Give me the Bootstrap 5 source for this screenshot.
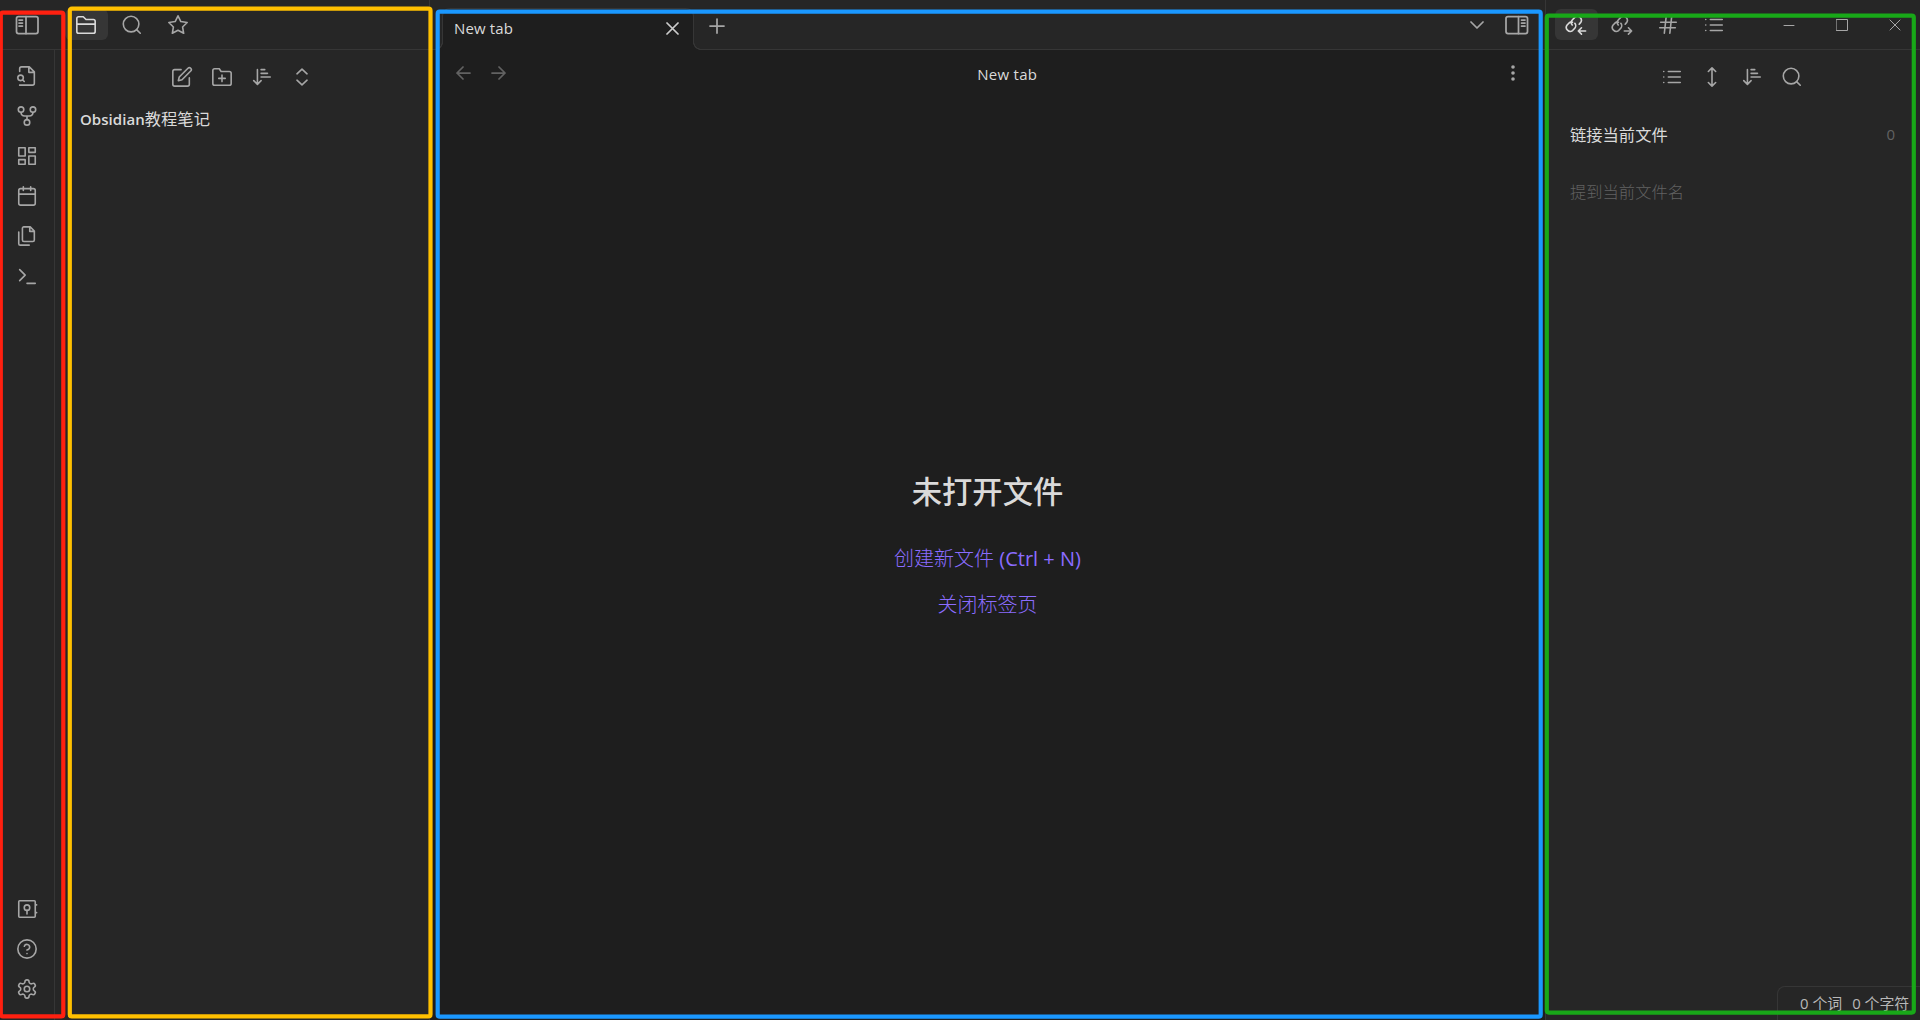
<!DOCTYPE html>
<html lang="zh-CN">
<head>
<meta charset="utf-8">
<title>Obsidian</title>
<link href="https://cdn.jsdelivr.net/npm/bootstrap@5.3.0/dist/css/bootstrap.min.css" rel="stylesheet">
<style>
:root{--line:#363636;--side:#262626;--main:#1e1e1e;--ico:#a6a6a6;--txt:#dadada}
body{width:1920px;height:1020px;background:var(--side);color:var(--txt);font:400 15px/24px "Open Sans","Noto Sans CJK SC",sans-serif;overflow:hidden}
.cjk{font-family:"Noto Sans CJK SC",sans-serif;font-weight:300}
.ic{width:22px;height:22px;flex:none;display:block;fill:none;stroke:var(--ico);stroke-width:1.75;stroke-linecap:round;stroke-linejoin:round}
.left-pane{width:430px;border-right:1px solid var(--line)}
.right-pane{width:375px;border-left:1px solid var(--line);margin-left:-1px}
.topbar{height:50px;border-bottom:1px solid var(--line);flex:none}
.ribbon{width:55px;border-right:1px solid var(--line);padding:15px 0 20px}
.tabbtn{width:43px;height:31px;border-radius:6px;display:flex;align-items:center;justify-content:center}
.tabbtn.active{background:#363636}
.tabbtn.active .ic{stroke:var(--txt)}
.tabbtn .ic{margin-left:-1px}
.tools{gap:18px;padding-top:15.500px}
.vault-name{padding:18.500px 0 0 25px;font-size:16.300px}
.vault-name b{font-weight:600;font-size:15px;letter-spacing:.05px}
.main-pane{background:var(--main)}
.strip{background:var(--side);padding-left:12px}
.doc-tab{width:252px;height:42px;margin:8px 0 -1px;background:var(--main);border:1px solid var(--line);border-bottom:0;border-radius:8px 8px 0 0;padding:0 14px 3px 11px;position:relative;letter-spacing:.15px}
.doc-tab::before,.doc-tab::after{content:"";position:absolute;bottom:0;width:8px;height:8px}
.doc-tab::before{left:-8px;background:radial-gradient(circle at 0 0,var(--side) 6.500px,var(--line) 7px 7.700px,var(--main) 8.200px)}
.doc-tab::after{right:-8px;background:radial-gradient(circle at 100% 0,var(--side) 6.500px,var(--line) 7px 7.700px,var(--main) 8.200px)}
.view-head{height:48px;padding:0 20px 0 12px}
.empty-title{font:500 30.300px/40px "Noto Sans CJK SC",sans-serif}
.act{color:#8b6cff;font-size:20px;line-height:28px}
.faint{color:#626262}
.status{width:143px;height:34px;border:1px solid var(--line);border-right:0;border-bottom:0;border-radius:8px 0 0 0;padding:4px 0 0 22px;font-size:14.900px;color:#b8b8b8;gap:10px;white-space:nowrap}
.marks{position:absolute;left:0;top:0;pointer-events:none}
</style>
<script src="https://cdn.jsdelivr.net/npm/bootstrap@5.3.0/dist/js/bootstrap.bundle.min.js"></script>
</head>
<body class="d-flex m-0 position-relative">
<svg width="0" height="0" class="position-absolute">
<symbol id="search" viewBox="0 0 24 24"><circle cx="11" cy="11" r="8.5"/><path d="m21 21-4-4"/></symbol>
<symbol id="list" viewBox="0 0 24 24"><path d="M8 6h13M8 12h13M8 18h13M3 6h.01M3 12h.01M3 18h.01"/></symbol>
<symbol id="sort" viewBox="0 0 24 24"><path d="m3 16 4 4 4-4M7 20V4M11 4h4M11 8h7M11 12h10"/></symbol>
<symbol id="chain" viewBox="0 0 24 24"><path transform="translate(-.7 .4) scale(.86)" stroke-width="2.050" d="M10 13.500a5 5 0 0 1 .3-6.600l3.200-3.400a5 5 0 0 1 7 7l-1.700 2M10.300 10 9 9.500a5 5 0 0 0-2.500 1l-3 3a5 5 0 0 0 7 7l2-2.200a5 5 0 0 0 .8-7"/></symbol>
</svg>
<aside class="left-pane d-flex flex-column flex-shrink-0">
 <div class="topbar d-flex">
  <div class="d-flex align-items-center justify-content-center" style="width:54px">
   <svg class="ic" style="width:24px;height:20px" viewBox="0 0 24 20"><rect x="1.500" y="1.500" width="21.500" height="17" rx="2"/><path d="M11 1.500v17M4 5h3.500M4 8h3.500M4 11h3.500" /></svg>
  </div>
  <div class="d-flex" style="padding:9px 0 0 11px;gap:3px">
   <div class="tabbtn active"><svg class="ic" viewBox="0 0 24 24"><path d="M2 19V5a2 2 0 0 1 2-2h5l3 3h8a2 2 0 0 1 2 2v11a2 2 0 0 1-2 2H4a2 2 0 0 1-2-2zM2 11h20"/></svg></div>
   <div class="tabbtn"><svg class="ic"><use href="#search"/></svg></div>
   <div class="tabbtn"><svg class="ic" viewBox="0 0 24 24"><path d="m12 2 3.090 6.260L22 9.270l-5 4.870 1.180 6.880L12 17.770l-6.180 3.250L7 14.140 2 9.270l6.910-1.010L12 2z"/></svg></div>
  </div>
 </div>
 <div class="d-flex flex-grow-1">
  <nav class="ribbon d-flex flex-column align-items-center justify-content-between">
   <div class="d-flex flex-column" style="gap:18px">
    <svg class="ic" viewBox="0 0 24 24"><path d="M4 22h14a2 2 0 0 0 2-2V7.500L14.500 2H6a2 2 0 0 0-2 2v3M14 2v6h6M5 17a3 3 0 1 0 0-6 3 3 0 0 0 0 6zM9 18l-1.500-1.500"/></svg>
    <svg class="ic" viewBox="0 0 24 24"><circle cx="12" cy="19" r="3"/><circle cx="5.500" cy="5" r="3"/><circle cx="18.500" cy="5" r="3"/><path d="M5.500 8c0 3 2 4 4 4h5c2 0 4-1 4-4M12 12v4"/></svg>
    <svg class="ic" viewBox="0 0 24 24"><path d="M3 3h7v9H3zM14 3h7v5h-7zM14 12h7v9h-7zM3 16h7v5H3z"/></svg>
    <svg class="ic" viewBox="0 0 24 24"><rect x="3" y="4" width="18" height="18" rx="2"/><path d="M16 2v4M8 2v4M3 10h18"/></svg>
    <svg class="ic" viewBox="0 0 24 24"><path d="M15.500 2H8.600c-.9 0-1.600.7-1.600 1.600v12.800c0 .9.700 1.600 1.600 1.600h9.800c.9 0 1.600-.7 1.600-1.600V6.500L15.500 2zM3 7.600v12.800c0 .9.700 1.600 1.600 1.600h9.800M15 2v5h5"/></svg>
    <svg class="ic" viewBox="0 0 24 24"><path d="m4 17 6-6-6-6M12 20h9"/></svg>
   </div>
   <div class="d-flex flex-column" style="gap:18px">
    <svg class="ic" viewBox="0 0 24 24"><rect x="3" y="3" width="18" height="18" rx="1"/><circle cx="12" cy="10.500" r="3"/><path d="M12 13.500v4M22 7.500h.5M22 16h.5"/></svg>
    <svg class="ic" viewBox="0 0 24 24"><circle cx="12" cy="12" r="10"/><path d="M9.090 9a3 3 0 0 1 5.830 1c0 2-3 3-3 3M12 17h.01"/></svg>
    <svg class="ic" viewBox="0 0 24 24"><circle cx="12" cy="12" r="3"/><path d="M12.220 2h-.44a2 2 0 0 0-2 2v.18a2 2 0 0 1-1 1.730l-.43.25a2 2 0 0 1-2 0l-.15-.08a2 2 0 0 0-2.730.73l-.22.38a2 2 0 0 0 .73 2.730l.15.1a2 2 0 0 1 1 1.720v.51a2 2 0 0 1-1 1.740l-.15.09a2 2 0 0 0-.73 2.730l.22.38a2 2 0 0 0 2.730.73l.15-.08a2 2 0 0 1 2 0l.43.25a2 2 0 0 1 1 1.730V20a2 2 0 0 0 2 2h.44a2 2 0 0 0 2-2v-.18a2 2 0 0 1 1-1.730l.43-.25a2 2 0 0 1 2 0l.15.08a2 2 0 0 0 2.730-.73l.22-.39a2 2 0 0 0-.73-2.730l-.15-.08a2 2 0 0 1-1-1.740v-.5a2 2 0 0 1 1-1.740l.15-.09a2 2 0 0 0 .73-2.730l-.22-.38a2 2 0 0 0-2.730-.73l-.15.08a2 2 0 0 1-2 0l-.43-.25a2 2 0 0 1-1-1.730V4a2 2 0 0 0-2-2z"/></svg>
   </div>
  </nav>
  <section class="flex-grow-1">
   <div class="tools d-flex justify-content-center">
    <svg class="ic" viewBox="0 0 24 24"><path d="M11 4H4a2 2 0 0 0-2 2v14a2 2 0 0 0 2 2h14a2 2 0 0 0 2-2v-7M18.500 2.500a2.121 2.121 0 0 1 3 3L12 15l-4 1 1-4z"/></svg>
    <svg class="ic" viewBox="0 0 24 24"><path d="M2 19V5a2 2 0 0 1 2-2h5l2 3h9a2 2 0 0 1 2 2v11a2 2 0 0 1-2 2H4a2 2 0 0 1-2-2zM12 10v7M8.500 13.500h7"/></svg>
    <svg class="ic"><use href="#sort"/></svg>
    <svg class="ic" viewBox="0 0 24 24"><path d="m6.500 15.500 5.500 5 5.500-5M6.500 8.500l5.500-5 5.500 5"/></svg>
   </div>
   <div class="vault-name"><b>Obsidian</b><span class="cjk fw-normal">教程笔记</span></div>
  </section>
 </div>
</aside>
<main class="main-pane flex-grow-1 d-flex flex-column">
 <div class="topbar strip d-flex">
  <div class="doc-tab d-flex align-items-center justify-content-between"><span>New tab</span><svg class="ic" style="width:13px;height:13px;stroke:#ccc" viewBox="0 0 13 13"><path d="m1 1 11 11M12 1 1 12"/></svg></div>
  <svg class="ic" style="width:16px;height:16px;margin:17.500px 0 0 15px" viewBox="0 0 16 16"><path d="M8 1v14M1 8h14"/></svg>
  <div class="d-flex ms-auto align-items-center" style="gap:21px;padding-right:17px">
   <svg class="ic" style="width:14px;height:8px" viewBox="0 0 14 8"><path d="m1 1 6 6 6-6"/></svg>
   <svg class="ic" style="width:24px;height:20px" viewBox="0 0 24 20"><rect x="1" y="1.500" width="21.500" height="17" rx="2"/><path d="M13.500 1.500v17M16.500 5H20M16.500 8H20M16.500 11H20"/></svg>
  </div>
 </div>
 <div class="view-head d-flex align-items-center justify-content-between">
  <div class="d-flex" style="gap:20px;opacity:.5;padding:0 0 2px 12.500px">
   <svg class="ic" style="width:16px;height:16px" viewBox="0 0 16 16"><path d="M15 8H2M8 2 2 8l6 6"/></svg>
   <svg class="ic" style="width:16px;height:16px" viewBox="0 0 16 16"><path d="M1 8h13M8 2l6 6-6 6"/></svg>
  </div>
  <span style="margin-left:4px;letter-spacing:.25px">New tab</span>
  <svg class="ic" style="fill:var(--ico);stroke:none;margin-top:-2px" viewBox="0 0 22 22"><circle cx="9" cy="5" r="1.800"/><circle cx="9" cy="11" r="1.800"/><circle cx="9" cy="17" r="1.800"/></svg>
 </div>
 <div class="d-flex flex-column align-items-center" style="padding:372px 1px 0 0">
  <div class="empty-title">未打开文件</div>
  <div class="act" style="margin-top:34px"><span class="cjk">创建新文件</span> (Ctrl + N)</div>
  <div class="act" style="margin-top:17px"><span class="cjk">关闭标签页</span></div>
 </div>
</main>
<aside class="right-pane d-flex flex-column flex-shrink-0">
 <div class="topbar d-flex justify-content-between">
  <div class="d-flex" style="padding:9px 0 0 9px;gap:3px">
   <div class="tabbtn active"><svg class="ic" viewBox="0 0 24 24"><use href="#chain" width="24" height="24"/><path d="M22.500 18.500h-8M18 15l-3.500 3.500 3.500 3.500"/></svg></div>
   <div class="tabbtn"><svg class="ic" viewBox="0 0 24 24"><use href="#chain" width="24" height="24"/><path d="M14.500 18.500h8M19 15l3.500 3.500-3.500 3.500"/></svg></div>
   <div class="tabbtn"><svg class="ic" viewBox="0 0 24 24"><path d="M4 9h17M3 15h17M10 3 8 21M16 3l-2 18"/></svg></div>
   <div class="tabbtn"><svg class="ic"><use href="#list"/></svg></div>
  </div>
  <div class="d-flex align-items-center" style="gap:41px;padding-right:19.500px">
   <svg class="ic" style="width:12px;height:12px;stroke-width:1" viewBox="0 0 12 12"><path d="M1 6.500h10"/></svg>
   <svg class="ic" style="width:12px;height:12px;stroke-width:1" viewBox="0 0 12 12"><path d="M.5.5h11v11H.5z"/></svg>
   <svg class="ic" style="width:12px;height:12px;stroke-width:1" viewBox="0 0 12 12"><path d="m1 1 10 10M11 1 1 11"/></svg>
  </div>
 </div>
 <div class="tools d-flex justify-content-center" style="padding-right:2px">
  <svg class="ic"><use href="#list"/></svg>
  <svg class="ic" viewBox="0 0 24 24"><path d="m8 18 4 4 4-4M8 6l4-4 4 4M12 2v20"/></svg>
  <svg class="ic"><use href="#sort"/></svg>
  <svg class="ic"><use href="#search"/></svg>
 </div>
 <div class="d-flex justify-content-between" style="padding:34px 25px 0 24px;font-size:16.300px"><span class="cjk fw-normal">链接当前文件</span><span class="faint" style="font-size:15px">0</span></div>
 <div class="cjk faint" style="padding:33px 24px 0;font-size:16.300px">提到当前文件名</div>
 <div class="status d-flex mt-auto ms-auto"><span>0 个词</span><span>0 个字符</span></div>
</aside>
<svg class="marks" width="1920" height="1020" fill="none" stroke-width="4.200">
 <rect x="0.800" y="12.700" width="62.500" height="1003.700" rx="2" stroke="#ff2010"/>
 <rect x="69.800" y="8.700" width="360.700" height="1007.700" rx="2" stroke="#ffc000"/>
 <rect x="437.700" y="11.700" width="1103" height="1005" rx="2" stroke="#1a98ff"/>
 <rect x="1546.800" y="15.600" width="367" height="997" rx="2" stroke="#18a818"/>
</svg>
</body>
</html>
